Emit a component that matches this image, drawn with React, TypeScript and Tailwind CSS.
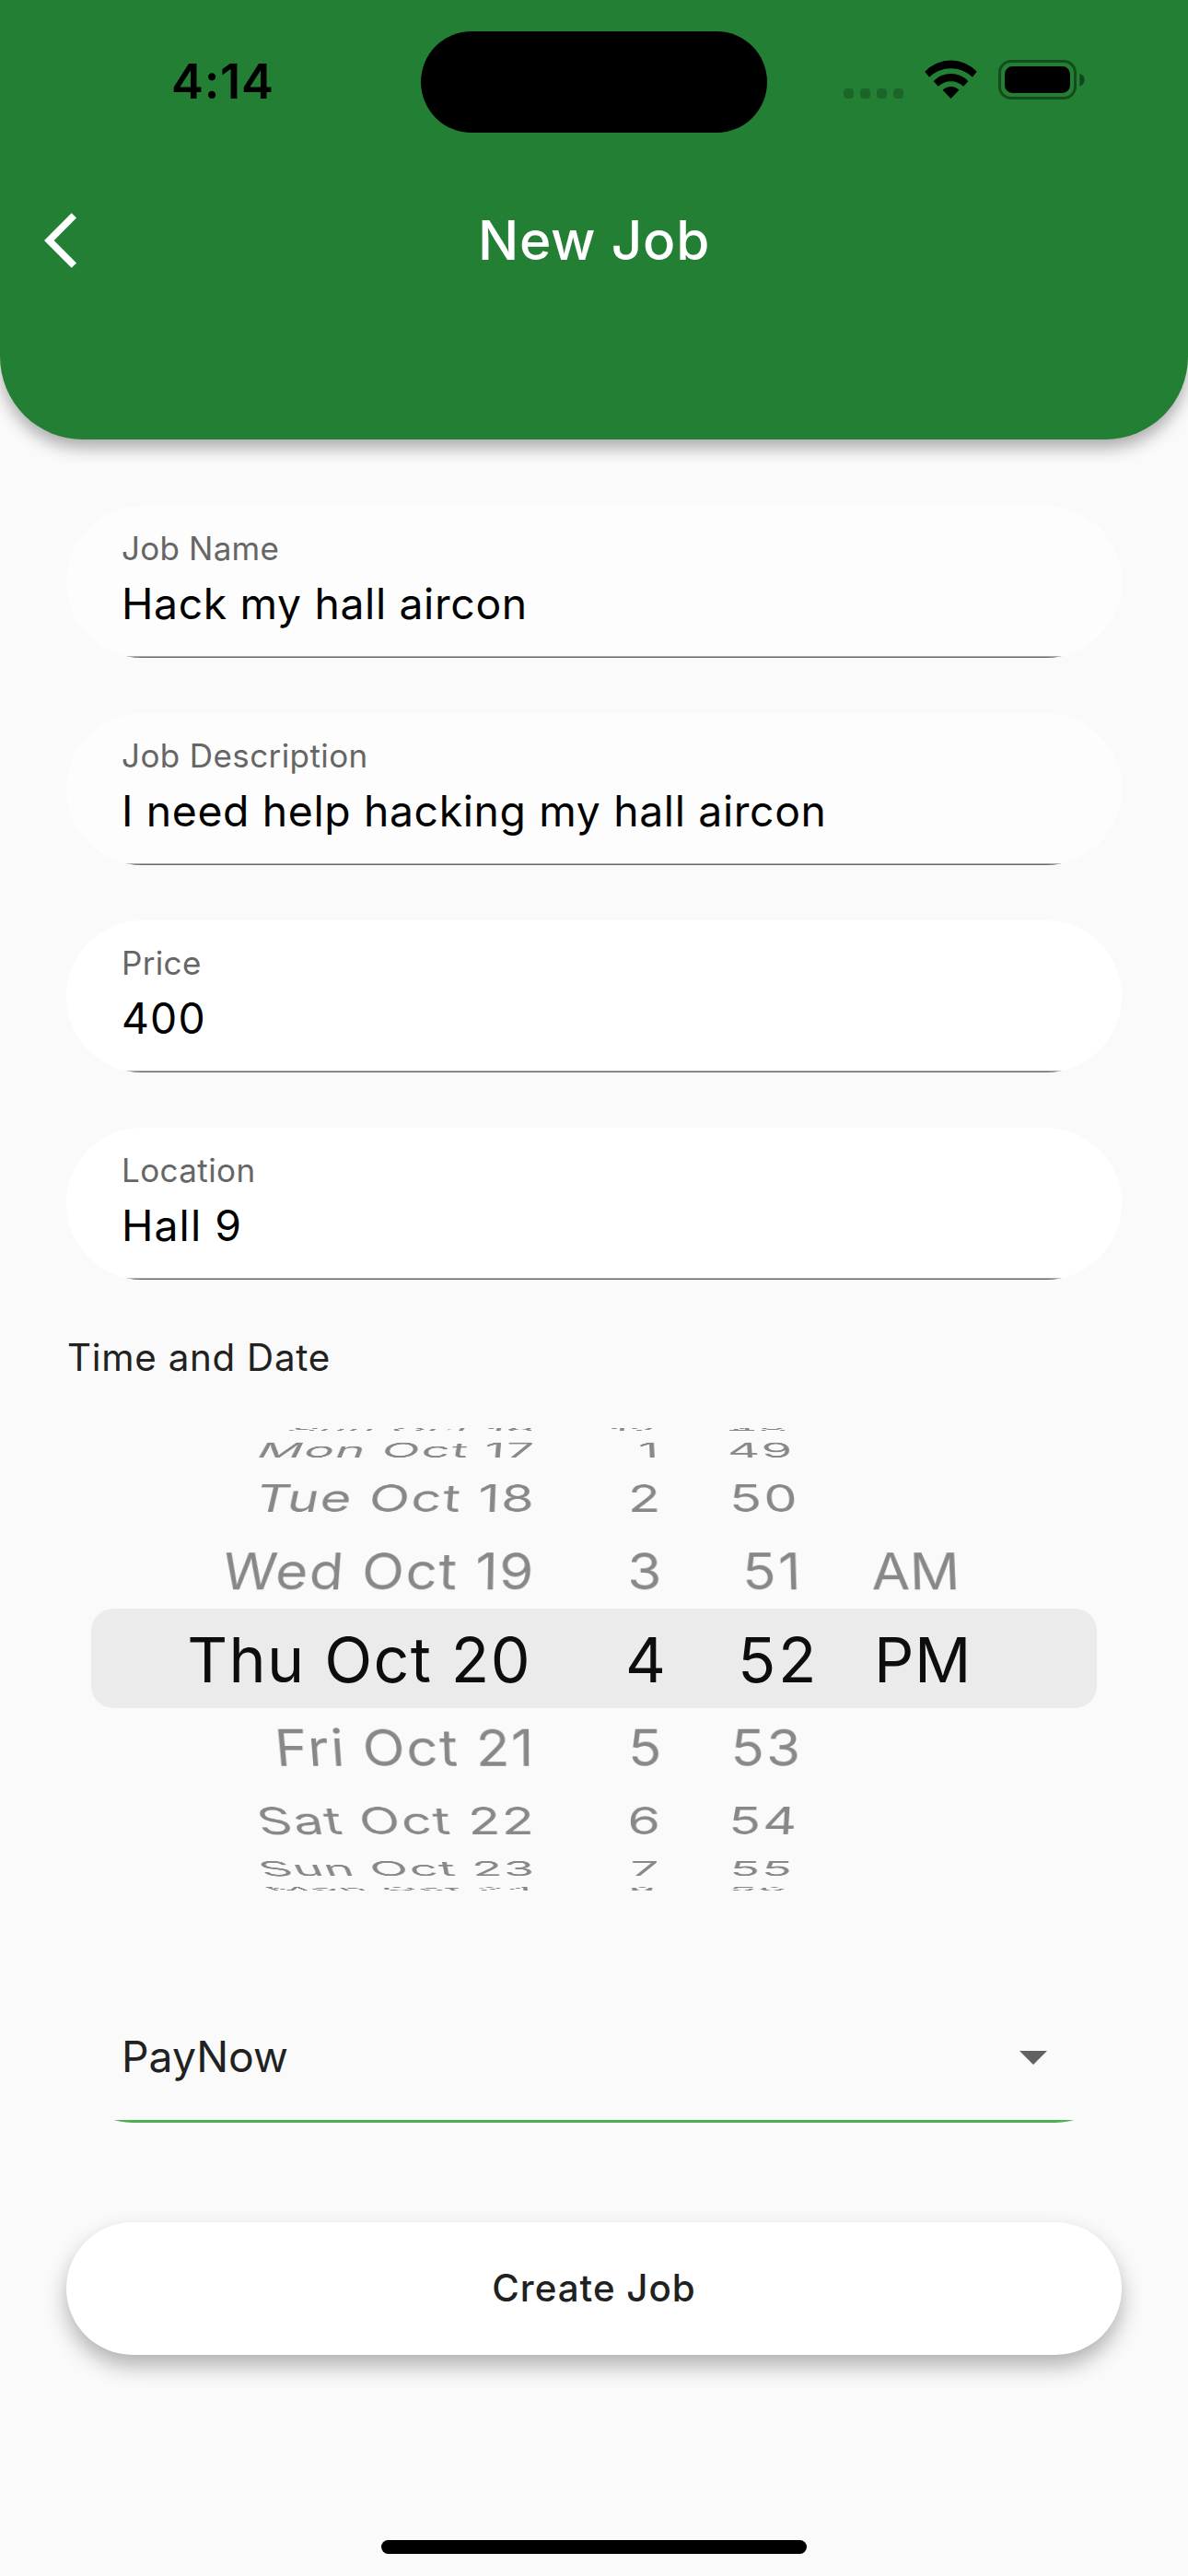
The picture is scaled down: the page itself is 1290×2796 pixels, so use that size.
type Field = { label: string; value: string; labelClass: string; valueClass: string; fill: string };

const FIELDS: Field[] = [
  { label: "Job Name", value: "Hack my hall aircon", labelClass: "tracking-[0.21px]", valueClass: "tracking-[0.65px]", fill: "bg-[#fdfdfd]" },
  { label: "Job Description", value: "I need help hacking my hall aircon", labelClass: "tracking-[0.4px]", valueClass: "tracking-[0.65px]", fill: "bg-[#fdfdfd]" },
  { label: "Price", value: "400", labelClass: "tracking-[0.34px]", valueClass: "tracking-[1.19px]", fill: "bg-white" },
  { label: "Location", value: "Hall 9", labelClass: "tracking-[0.4px]", valueClass: "tracking-[1.1px]", fill: "bg-white" },
];

function StatusIcons() {
  return (
    <div className="flex h-[75px] items-end pl-[83px]">
      <div className="mb-px flex gap-[7px]">
        {[0, 1, 2, 3].map((i) => (
          <span key={i} className="size-[11px] rounded-[4px] bg-black/20" />
        ))}
      </div>
      <svg className="mb-px ml-[23px]" width="57" height="42" viewBox="0 0 57 42">
        <path d="M0.3 12.8A38.7 38.7 0 0 1 56.7 12.8L52 18.8A34 34 0 0 0 5 18.8Z" />
        <path d="M9.7 23.2A25.6 25.6 0 0 1 47.3 23.2L42.2 28.7A20 20 0 0 0 14.8 28.7Z" />
        <path d="M19.6 32.8A12.1 12.1 0 0 1 37.4 32.8L28.5 42Z" />
      </svg>
      <svg className="ml-[23px]" width="94" height="43" viewBox="0 0 94 43">
        <rect x="1.5" y="1.5" width="82" height="40" rx="12.5" fill="none" stroke="#000" strokeWidth="3" strokeOpacity="0.4" />
        <rect x="7" y="7" width="71" height="29" rx="8.5" />
        <path d="M88.3 14.8V28.6C91.6 27.4 93.7 24.8 93.7 21.7S91.6 16 88.3 14.8Z" fillOpacity="0.45" />
      </svg>
    </div>
  );
}

function Header() {
  return (
    <header className="relative h-[477px] rounded-b-[90px] bg-[#237f33] pt-[33px] shadow-[0_10px_18px_-1px_rgba(0,0,0,0.32)]">
      <div className="grid h-[112px] grid-cols-[457px_376px_1fr]">
        <span className="pl-[186px] text-[52.5px] leading-[110px] font-semibold tracking-[0.7px] text-black">4:14</span>
        <span className="mt-px h-[110px] rounded-full bg-black" />
        <StatusIcons />
      </div>
      <div className="mt-20 grid h-[72px] grid-cols-[1fr_auto_1fr] items-center px-12">
        <svg width="72" height="72" viewBox="0 0 24 24" fill="#fff">
          <path d="M11.67 3.87L9.9 2.1 0 12l9.9 9.9 1.77-1.77L3.54 12z" />
        </svg>
        <h1 className="text-[58.5px] leading-[72px] font-medium tracking-[0.75px] text-white">New Job</h1>
        <span />
      </div>
    </header>
  );
}

function TextField({ field }: { field: Field }) {
  return (
    <div className={`relative h-[165px] overflow-hidden rounded-full pt-6 pl-[60px] ${field.fill}`}>
      <div className={`text-[35px] leading-[44px] text-[#666] ${field.labelClass}`}>{field.label}</div>
      <div className={`mt-2 text-[46.3px] leading-[60px] text-black ${field.valueClass}`}>{field.value}</div>
      <span className="absolute inset-x-0 bottom-0 h-[2px] border-t border-b border-t-[#acacac] border-b-[#666]" />
    </div>
  );
}

const RADIUS = 321;
const STEP = 17.65;

type WheelProps = {
  items: string[];
  selected: number;
  className: string;
  activeClass: string;
};

/** One drum of the date picker; rows are laid on a cylinder seen in perspective. */
function Wheel({ items, selected, className, activeClass }: WheelProps) {
  return (
    <div className={`grid perspective-[1000px] ${className}`}>
      {items.map((text, i) => {
        const offset = selected - i;
        if (offset === 0) {
          return (
            <div key={text} className={`col-start-1 row-start-1 self-center text-[68px] leading-[90px] whitespace-nowrap text-[#0d0d0d] ${activeClass}`}>
              {text}
            </div>
          );
        }
        return (
          <div
            key={text}
            className="col-start-1 row-start-1 self-center text-[61px] leading-[90px] whitespace-nowrap text-[#888]"
            style={{ transform: `translateZ(${-RADIUS}px) rotateX(${offset * STEP}deg) translateZ(${RADIUS}px)` }}
          >
            {text}
          </div>
        );
      })}
    </div>
  );
}

function DatePicker() {
  return (
    <div className="mt-[45px] grid h-[503px] overflow-hidden">
      <div className="col-start-1 row-start-1 mt-[197px] mr-[27px] ml-[27px] h-[108px] rounded-[24px] bg-[#ebebeb]" />
      <div className="col-start-1 row-start-1 grid grid-cols-[509px_138px_154px_1fr]">
        <Wheel
          items={["Sun Oct 16", "Mon Oct 17", "Tue Oct 18", "Wed Oct 19", "Thu Oct 20", "Fri Oct 21", "Sat Oct 22", "Sun Oct 23", "Mon Oct 24"]}
          selected={4}
          className="text-right tracking-[1.6px] perspective-origin-[514px_50%]"
          activeClass="mr-[4px] tracking-[1.38px]"
        />
        <Wheel
          items={["12", "1", "2", "3", "4", "5", "6", "7", "8"]}
          selected={4}
          className="text-right perspective-origin-[103px_50%]"
          activeClass="-mr-[4px]"
        />
        <Wheel
          items={["48", "49", "50", "51", "52", "53", "54", "55", "56"]}
          selected={4}
          className="text-right tracking-[2.3px] perspective-origin-[60px_50%]"
          activeClass="-mr-[16px] tracking-[2.56px]"
        />
        <Wheel
          items={["AM", "PM"]}
          selected={1}
          className="pl-[74px] text-left perspective-origin-[36px_50%]"
          activeClass="ml-[2px] tracking-[0.67px]"
        />
      </div>
    </div>
  );
}

export default function App() {
  return (
    <div className="flex min-h-[2796px] w-[1290px] flex-col bg-[#fafafa] font-['Inter',sans-serif]">
      <Header />
      <main className="flex flex-col px-[72px] pt-[72px]">
        <div className="flex flex-col gap-[60px]">
          {FIELDS.map((field) => (
            <TextField key={field.label} field={field} />
          ))}
        </div>
        <div className="mt-[55px] pl-px text-[40.3px] leading-[60px] tracking-[0.75px] text-[#212121]">Time and Date</div>
        <DatePicker />
        <div className="relative mt-[108px] flex h-[144px] items-center justify-between overflow-hidden rounded-full pr-[81px] pl-[60px]">
          <span className="text-[46.3px] leading-[60px] text-[#212121]">PayNow</span>
          <svg className="mt-[2px]" width="30" height="15" viewBox="0 0 30 15" fill="#616161">
            <path d="M0 0L15 15L30 0Z" />
          </svg>
          <span className="absolute inset-x-0 bottom-0 h-[3px] bg-[#4caf50]" />
        </div>
        <button className="mt-[108px] h-[144px] rounded-full bg-white text-[40.3px] leading-[60px] font-medium tracking-[0.99px] text-[#212121] shadow-[0_12px_24px_-1px_rgba(0,0,0,0.31)]">
          Create Job
        </button>
      </main>
      <div className="mt-auto mb-6 h-[15px] w-[462px] self-center rounded-full bg-black" />
    </div>
  );
}
